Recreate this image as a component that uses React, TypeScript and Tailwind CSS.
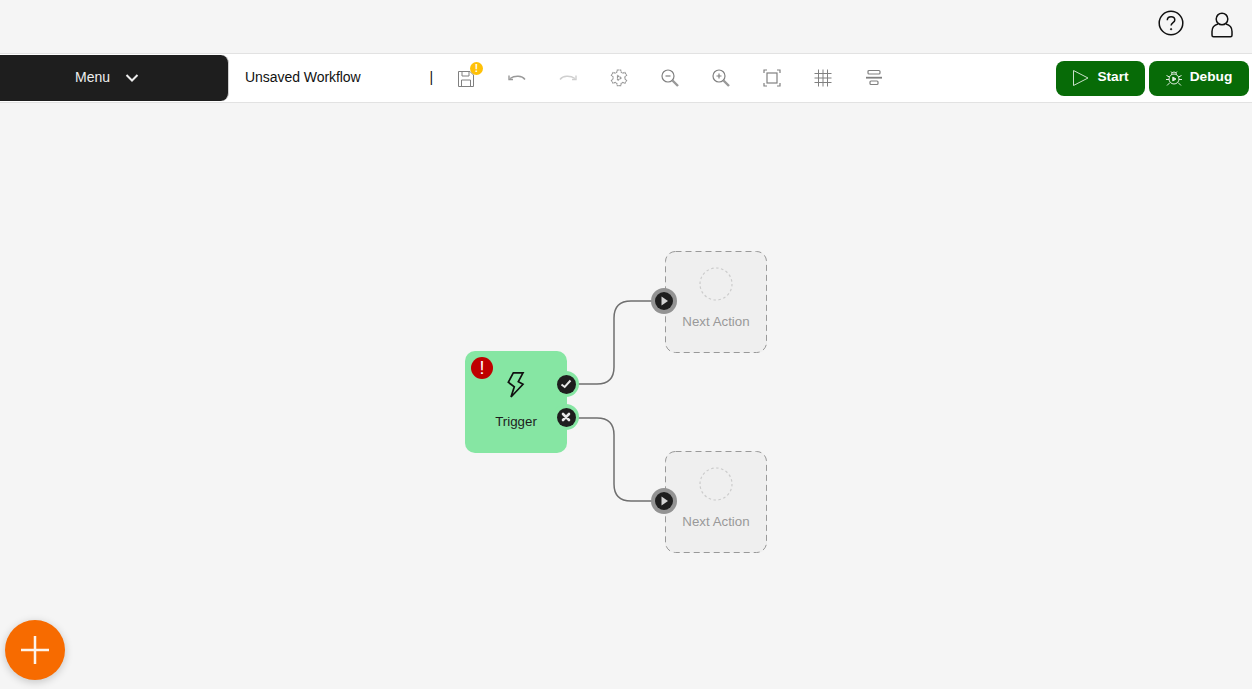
import React from "react";

const Ic = ({ children, cls = "" }: { children: React.ReactNode; cls?: string }) => (
  <div className={`relative w-[51px] h-full flex items-center justify-center ${cls}`}>{children}</div>
);

const svgp = { width: 20, height: 20, viewBox: "0 0 20 20", fill: "none", stroke: "#808080", strokeWidth: 1.2 };

function PlayBadge() {
  return (
    <div className="w-[26px] h-[26px] rounded-full bg-[#939393] flex items-center justify-center">
      <div className="w-[18px] h-[18px] rounded-full bg-[#1e1e1e] flex items-center justify-center">
        <svg width="10" height="10" viewBox="0 0 10 10"><path d="M2.500 0.500 L9 5 L2.500 9.500 Z" fill="#d4d4d4" /></svg>
      </div>
    </div>
  );
}

function NextAction({ top }: { top: number }) {
  return (
    <div
      className="absolute left-[665px] w-[102px] h-[102px] rounded-[10px] bg-[#efefef] flex flex-col items-center"
      style={{ top }}
    >
      <svg width="102" height="102" className="absolute left-0 top-0" fill="none">
        <rect x="0.500" y="0.500" width="101" height="101" rx="10" stroke="#999999" strokeDasharray="6 4" />
        <circle cx="51" cy="33" r="16" stroke="#cccccc" strokeWidth="1.200" strokeDasharray="2.500 2.500" />
      </svg>
      <div className="mt-[63px] text-[13.3px] leading-[16px] text-[#999999]">Next Action</div>
    </div>
  );
}

export default function App() {
  return (
    <div className="relative w-[1252px] h-[689px] overflow-hidden bg-[#f5f5f5] font-['Liberation_Sans',Arial,sans-serif]">
      <header className="h-[54px] border-b border-[#e2e2e2] flex items-center justify-end">
        <svg width="26" height="26" viewBox="0 0 26 26" fill="none" stroke="#111" strokeWidth="1.500" className="mr-[27px] mb-[7px]">
          <circle cx="13" cy="13" r="11.800" />
          <path d="M9.300 10.200c0-2.100 1.700-3.500 3.800-3.500s3.700 1.400 3.700 3.200c0 2.600-3.700 2.800-3.700 5.600" />
          <circle cx="13.100" cy="19.200" r="0.700" fill="#111" strokeWidth="0.800" />
        </svg>
        <svg width="22" height="26" viewBox="0 0 22 26" fill="none" stroke="#111" strokeWidth="1.500" className="mr-[19px] mb-[3px]">
          <circle cx="11" cy="7" r="5.800" />
          <path d="M7 12C3 13 1 15.500 1 19.500v3.700c0 1 .6 1.500 1.500 1.500h17c.9 0 1.500-.5 1.500-1.500v-3.700c0-4-2-6.500-6-7.500" />
        </svg>
      </header>

      <div className="h-[49px] bg-white border-b border-[#e2e2e2] flex items-center">
        <div className="w-[229px] h-full py-[1px] shrink-0">
          <div className="h-[46px] bg-[#1e1e1e] rounded-r-[8px] border-r border-[#cfcfcf] flex items-center pl-[75px]">
            <span className="text-[14px] text-[#eeeeee] mb-[2px]">Menu</span>
            <svg width="14" height="10" viewBox="0 0 14 10" fill="none" stroke="#eeeeee" strokeWidth="2" className="ml-[15px]">
              <path d="M1.500 2 L7 7.500 L12.500 2" />
            </svg>
          </div>
        </div>
        <span className="ml-[16px] w-[184px] text-[14px] text-[#111] mb-[2px] tracking-[-0.05px]">Unsaved Workflow</span>
        <span className="w-[12px] pl-[0.4px] text-[14px] text-[#111] mb-[2px]">|</span>
        <div className="flex h-full -ml-[1px]">
          <Ic>
            <svg {...svgp} width="18" height="18" viewBox="0 0 18 18" className="mt-[1px]" strokeWidth={1}>
              <path d="M1.500 1.500h11.500l3.500 3.500v11.500H1.500z" />
              <path d="M5 1.500v4.500h7V1.500M4.500 16.500v-6.500h9v6.500" />
            </svg>
            <div className="absolute left-[30px] top-[8px] w-[13px] h-[13px] rounded-full bg-[#ffc107] flex items-center justify-center text-[10px] leading-none font-bold text-white">!</div>
          </Ic>
          <Ic>
            <svg {...svgp} stroke="#999" strokeWidth="1.400">
              <path d="M18 11.500C15 7.500 8 7.200 3 10.500" />
              <path d="M2 7.500v4h4" />
            </svg>
          </Ic>
          <Ic>
            <svg {...svgp} stroke="#cfcfcf" strokeWidth="1.400">
              <path d="M2 11.500C5 7.500 12 7.200 17 10.500" />
              <path d="M18 7.500v4h-4" />
            </svg>
          </Ic>
          <Ic>
            <svg {...svgp} stroke="#999" strokeWidth="1.200" strokeDasharray="2 0.400">
              <path d="M8.300 2.500h3.400l.5 2.200 1.500.9 2.200-.7 1.700 2.900-1.700 1.600v1.800l1.700 1.600-1.700 2.900-2.200-.7-1.500.9-.5 2.200H8.300l-.5-2.200-1.500-.9-2.200.7-1.700-2.900 1.700-1.600V9.400L2.400 7.800l1.700-2.900 2.200.7 1.500-.9z" transform="translate(0 -0.500)" />
              <path d="M8.500 7.500 L12.500 10 L8.500 12.500 Z" />
            </svg>
          </Ic>
          <Ic>
            <svg {...svgp} stroke="#808080">
              <circle cx="8" cy="8" r="6" />
              <path d="M5.500 8h5" />
              <path d="M12.500 12.500l5.500 5.500" strokeWidth="2.400" stroke="#999" />
            </svg>
          </Ic>
          <Ic cls="pl-[1px]">
            <svg {...svgp} stroke="#808080">
              <circle cx="8" cy="8" r="6" />
              <path d="M5.500 8h5M8 5.500v5" />
              <path d="M12.500 12.500l5.500 5.500" strokeWidth="2.400" stroke="#999" />
            </svg>
          </Ic>
          <Ic>
            <svg {...svgp}>
              <rect x="5" y="5" width="10" height="10" />
              <path d="M2 5V2h3M15 2h3v3M18 15v3h-3M5 18H2v-3" />
            </svg>
          </Ic>
          <Ic>
            <svg {...svgp} width="18" height="18" viewBox="0 0 18 18" strokeWidth={1}>
              <path d="M0.500 4.500h17M0.500 9h17M0.500 13.500h17M4.500 0.500v17M9 0.500v17M13.500 0.500v17" />
            </svg>
          </Ic>
          <Ic>
            <svg {...svgp} width="18" height="18" viewBox="0 0 18 18" strokeWidth={1.200}>
              <rect x="3" y="1.500" width="12" height="3.500" rx="1" />
              <rect x="5" y="12" width="8" height="3.500" rx="1" />
              <path d="M1 8.700h16" strokeWidth="1.800" />
            </svg>
          </Ic>
        </div>
        <div className="ml-auto flex gap-[4px] pr-[3px]">
          <button className="w-[89px] h-[35px] rounded-[8px] bg-[#076b07] flex items-center justify-center gap-[8px] text-[13.7px] font-bold text-white">
            <svg width="17" height="18" viewBox="0 0 17 18" fill="none" stroke="#c9dfc9" strokeWidth="1">
              <path d="M1.500 1.500 L16 9 L1.500 16.500 Z" />
            </svg>
            <span className="mb-[2px]">Start</span>
          </button>
          <button className="w-[100px] h-[35px] rounded-[8px] bg-[#076b07] flex items-center justify-center gap-[8px] text-[13.7px] font-bold text-white">
            <svg width="16" height="18" viewBox="0 0 16 18" fill="none" stroke="#e2eee2" strokeWidth="1">
              <circle cx="8" cy="10" r="5" />
              <path d="M5.500 5.500a2.500 2.500 0 0 1 5 0M5 2.500l1.300 1.500M11 2.500L9.700 4M0.500 6.500l3 1.500M15.500 6.500l-3 1.500M0 10.500h3M16 10.500h-3M1 16.500l3-3M15 16.500l-3-3" />
              <path d="M6.800 8 L10 10 L6.800 12 Z" fill="#e2eee2" />
            </svg>
            <span className="mb-[2px]">Debug</span>
          </button>
        </div>
      </div>

      <svg width="1252" height="689" className="absolute left-0 top-0 pointer-events-none" fill="none" stroke="#6f6f6f" strokeWidth="1.500">
        <path d="M576 384 H597 Q614 384 614 367 V318 Q614 301 631 301 H655" />
        <path d="M576 418 H597 Q614 418 614 435 V484 Q614 501 631 501 H655" />
      </svg>

      <div className="absolute left-[465px] top-[351px] w-[102px] h-[102px] rounded-[10px] bg-[#86e6a3] flex flex-col items-center">
        <div className="absolute left-[6px] top-[6px] w-[22px] h-[22px] rounded-full bg-[#bf0000] flex items-center justify-center text-[18px] leading-none font-normal text-white">!</div>
        <svg width="18" height="26" viewBox="0 0 18 26" fill="none" stroke="#111" strokeWidth="1.700" className="mt-[21px] -ml-[1px]">
          <path d="M6.300 .9H16L11.300 9.700 16 12.300 4 25 7.300 14.700 1.300 10.300z" />
        </svg>
        <div className="mt-[16px] text-[13.300px] leading-[16px] text-[#1d1d1d]">Trigger</div>
        <div className="absolute left-[88px] top-[20px] w-[26px] h-[26px] rounded-full bg-[#86e6a3] flex items-center justify-center">
          <div className="w-[19px] h-[19px] rounded-full bg-[#1e1e1e] flex items-center justify-center">
            <svg width="12" height="12" viewBox="0 0 12 12" fill="none" stroke="#e8e8e8" strokeWidth="2"><path d="M1.500 6.500 L4.700 9 L10.500 2.500" /></svg>
          </div>
        </div>
        <div className="absolute left-[88px] top-[53px] w-[26px] h-[26px] rounded-full bg-[#86e6a3] flex items-center justify-center">
          <div className="w-[19px] h-[19px] rounded-full bg-[#1e1e1e] flex items-center justify-center">
            <svg width="10" height="10" viewBox="0 0 10 10" fill="none" stroke="#e8e8e8" strokeWidth="2.600" strokeLinecap="round"><path d="M2 2 L8 8 M8 2 L2 8" /></svg>
          </div>
        </div>
      </div>

      <NextAction top={251} />
      <NextAction top={451} />
      <div className="absolute left-[651px] top-[288px]"><PlayBadge /></div>
      <div className="absolute left-[651px] top-[488px]"><PlayBadge /></div>

      <button className="absolute left-[5px] top-[620px] w-[60px] h-[60px] rounded-full bg-[#f76b00] shadow-[0_2px_8px_rgba(0,0,0,0.2)] flex items-center justify-center">
        <svg width="30" height="30" viewBox="0 0 30 30" stroke="#fdf3ea" strokeWidth="2.500"><path d="M15 1v28M1 15h28" /></svg>
      </button>
    </div>
  );
}
